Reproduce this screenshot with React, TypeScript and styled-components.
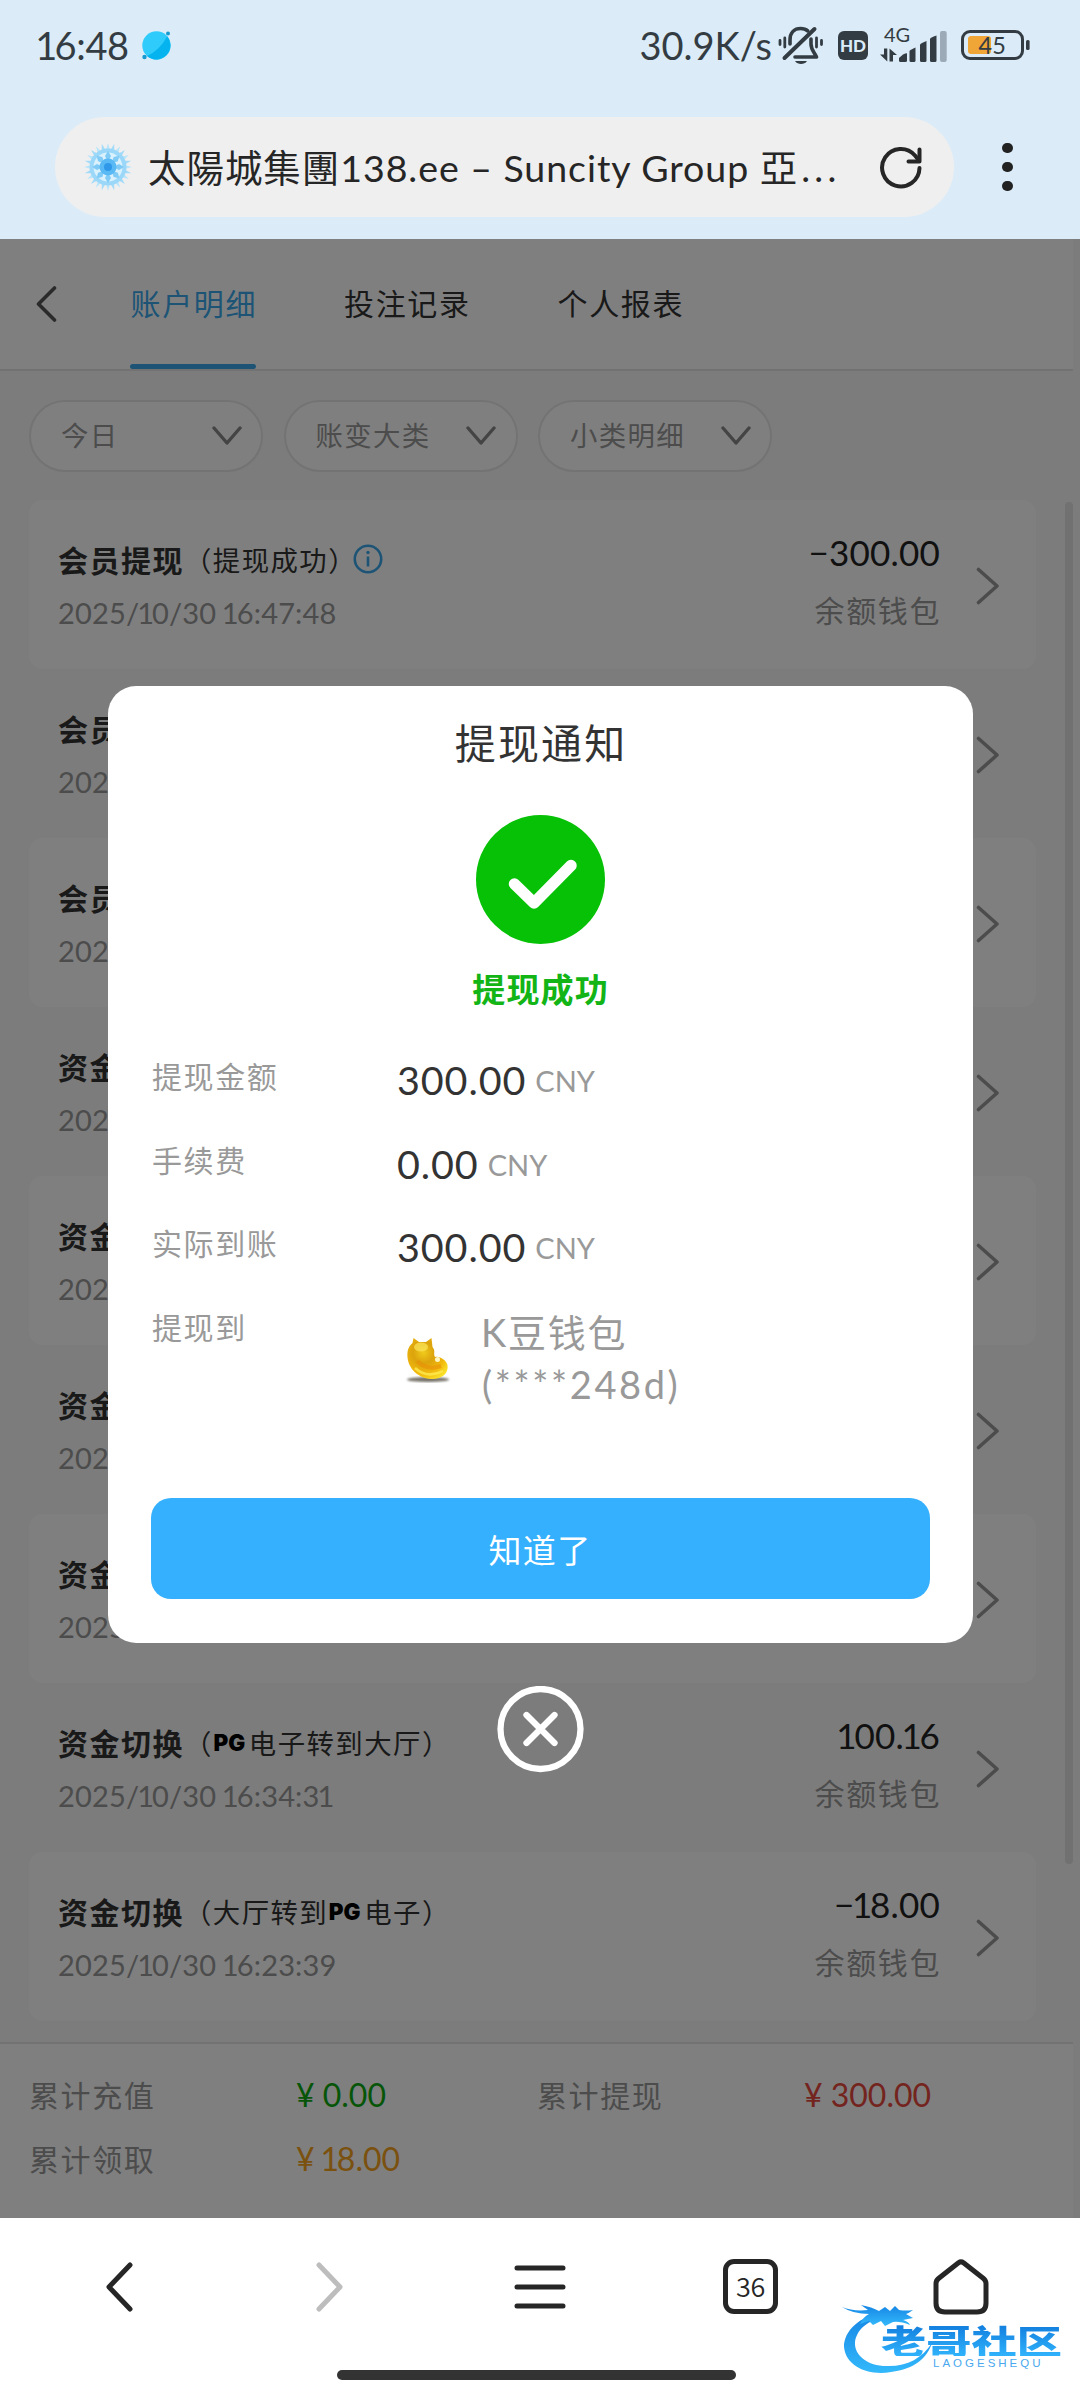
import React from "react";
import styled, { createGlobalStyle } from "styled-components";

const FONT = `Lato, "Noto Sans CJK SC", "Noto Sans", sans-serif`;

const Global = createGlobalStyle`
  * { box-sizing: border-box; }
  body { margin: 0; background: #fff; font-family: ${FONT}; -webkit-font-smoothing: antialiased; }
  svg { display: block; flex: none; }
`;

const Screen = styled.div`
  position: relative;
  width: 1080px;
  height: 2400px;
  display: flex;
  flex-direction: column;
  overflow: hidden;
  background: #fff;
`;

/* The digit one takes less room than the other figures. */
const NarrowOne = styled.span`
  margin: 0 -0.07em;
`;

const Figures = ({ children }: { children: string }) => (
  <span>
    {children.split(/(1)/).map((part, i) => (part === "1" ? <NarrowOne key={i}>1</NarrowOne> : part))}
  </span>
);

/* ---------- browser chrome ---------- */

const TopChrome = styled.header`
  height: 239px;
  background: #dbecf8;
  flex: none;
`;

const StatusBar = styled.div`
  height: 117px;
  padding: 16px 50px 0 38px;
  display: flex;
  align-items: flex-start;
  justify-content: space-between;
  color: #343c43;
`;

const StatusGroup = styled.div<{ $gap?: number }>`
  display: flex;
  align-items: center;
  height: 58px;
  gap: ${(p) => p.$gap ?? 0}px;
`;

const StatusText = styled.span<{ $spacing: number }>`
  font-size: 38px;
  line-height: 58px;
  letter-spacing: ${(p) => p.$spacing}px;
  white-space: nowrap;
`;

const StatusIcon = styled.span<{ $before: number }>`
  margin-left: ${(p) => p.$before}px;
  display: flex;
`;

const HdBadge = styled.span`
  width: 30px;
  height: 29px;
  margin-left: 14px;
  border-radius: 6px;
  background: #343c43;
  color: #dbecf8;
  font-size: 17px;
  font-weight: 900;
  line-height: 29px;
  text-align: center;
`;

const AddressRow = styled.div`
  display: flex;
  align-items: center;
  padding-left: 55px;
`;

const AddressPill = styled.div`
  width: 899px;
  height: 100px;
  border-radius: 50px;
  background: #efefef;
  padding: 0 31px 0 28px;
  display: flex;
  align-items: center;
`;

const AddressText = styled.span`
  flex: 1;
  margin-left: 15px;
  padding-top: 2px;
  color: #262626;
  font-family: Lato, "Noto Sans CJK TC", sans-serif;
  font-size: 37.5px;
  line-height: 60px;
  letter-spacing: 0.95px;
  white-space: nowrap;
`;

const Ellipsis = styled.span`
  margin-left: 3px;
  letter-spacing: 4.4px;
`;

const MenuDots = styled.div`
  margin-left: 48px;
  display: flex;
  flex-direction: column;
  gap: 8.5px;
`;

const Dot = styled.i`
  width: 10.5px;
  height: 10.5px;
  border-radius: 50%;
  background: #222;
`;

/* ---------- page ---------- */

const Page = styled.main`
  position: relative;
  height: 1979px;
  flex: none;
  background: #f8f8f8;
  padding-right: 7px;
  display: flex;
  flex-direction: column;
`;

const TabHeader = styled.nav`
  height: 132px;
  flex: none;
  background: #fff;
  border-bottom: 2px solid #e4e4e4;
  padding-left: 36px;
  display: flex;
  align-items: stretch;
`;

const BackButton = styled.span`
  width: 94px;
  display: flex;
  align-items: center;
`;

const Tab = styled.span<{ $active?: boolean }>`
  width: 126px;
  margin-right: 87.5px;
  display: flex;
  flex-direction: column;
  align-items: center;
  justify-content: space-between;
  font-size: 30px;
  line-height: 128px;
  height: 131px;
  letter-spacing: 1.6px;
  white-space: nowrap;
  color: ${(p) => (p.$active ? "#3ba9ec" : "#333")};
  padding-left: 1.6px;
`;

const TabInk = styled.i`
  width: 126px;
  height: 5px;
  margin: -3px 0 1px -1.6px;
  border-radius: 3px;
  background: #3ba9ec;
`;

const Filters = styled.div`
  display: flex;
  gap: 20.5px;
  padding: 29px 29px 28px;
  flex: none;
`;

const FilterPill = styled.div`
  width: 234px;
  height: 72px;
  border: 2px solid #e6e6e6;
  border-radius: 36px;
  background: #fff;
  padding: 0 19.5px 0 30px;
  display: flex;
  align-items: center;
  justify-content: space-between;
  color: #999;
  font-size: 27.4px;
  letter-spacing: 1.4px;
  line-height: 60px;
`;

const ListArea = styled.div`
  position: relative;
  height: 1542px;
  flex: none;
  padding: 0 37px 0 29px;
`;

const ScrollThumb = styled.i`
  position: absolute;
  right: 0;
  top: 2px;
  width: 8px;
  height: 1362px;
  border-radius: 4px;
  background: #e2e2e2;
`;

const Record = styled.article<{ $filled: boolean }>`
  height: 169px;
  border-radius: 14px;
  background: ${(p) => (p.$filled ? "#fff" : "transparent")};
  padding: 2px 36px 0 29px;
  display: flex;
  align-items: center;
`;

const RecordMain = styled.div`
  flex: 1;
  align-self: flex-start;
  padding-top: 35.5px;
`;

const RecordTitle = styled.div`
  display: flex;
  align-items: center;
  height: 42px;
  font-size: 30px;
  letter-spacing: 1.5px;
  font-weight: 700;
  color: #333;
  white-space: nowrap;
`;

const RecordNote = styled.span`
  display: flex;
  align-items: center;
  font-size: 27.4px;
  letter-spacing: 1.45px;
  font-weight: 400;
`;

const InfoMark = styled.span`
  margin-left: -4px;
  padding-top: 1px;
`;

const BrandPG = styled.b`
  width: 37px;
  margin-left: -1px;
  padding: 2px 2px 0 0;
  font-family: Inter, sans-serif;
  font-size: 22.5px;
  font-weight: 900;
  letter-spacing: 0;
  color: #000;
  text-align: center;
`;

const RecordDate = styled.div`
  margin-top: 12.5px;
  font-size: 29px;
  line-height: 42px;
  letter-spacing: 0.15px;
  color: #999;
  white-space: nowrap;
`;

const RecordSide = styled.div`
  align-self: flex-start;
  margin-right: 36px;
  padding-top: 29px;
  display: flex;
  flex-direction: column;
  align-items: flex-end;
`;

const Amount = styled.div`
  font-size: 35px;
  line-height: 42px;
  letter-spacing: 0.2px;
  color: #222;
`;

const Wallet = styled.div`
  margin-top: 16px;
  font-size: 30px;
  line-height: 42px;
  letter-spacing: 1.6px;
  margin-right: -1px;
  color: #999;
`;

const Summary = styled.footer`
  height: 176px;
  flex: none;
  background: #fff;
  border-top: 2px solid #e4e4e4;
  padding: 18px 30px 0 29px;
  display: grid;
  grid-template-columns: 267px 241px 267px 1fr;
  grid-auto-rows: 64px;
  align-items: center;
`;

const SummaryLabel = styled.span`
  font-size: 30px;
  letter-spacing: 1.6px;
  color: #999;
`;

const SummaryValue = styled.span<{ $color: string }>`
  font-size: 32px;
  color: ${(p) => p.$color};
`;

/* ---------- dialog ---------- */

const Overlay = styled.div`
  position: absolute;
  inset: 0;
  background: rgba(0, 0, 0, 0.5);
  display: flex;
  flex-direction: column;
  align-items: center;
  padding-top: 447px;
`;

const Dialog = styled.section`
  width: 865px;
  height: 957px;
  border-radius: 28px;
  background: #fff;
  padding: 0 43px;
  display: flex;
  flex-direction: column;
  align-items: center;
`;

const DialogTitle = styled.h2`
  margin: 29px 0 42px;
  padding-left: 2.2px;
  font-size: 41px;
  font-weight: 400;
  line-height: 58px;
  letter-spacing: 2.2px;
  color: #333;
`;

const ResultText = styled.div`
  margin-top: 20px;
  padding-left: 1.2px;
  font-size: 33px;
  font-weight: 700;
  line-height: 50px;
  letter-spacing: 1.2px;
  color: #12b416;
`;

const Details = styled.dl`
  width: 100%;
  margin: 40px 0 0;
  padding-left: 1.5px;
  display: grid;
  grid-template-columns: 245px 1fr;
  grid-template-rows: 83.5px 83.5px 83.5px 193.5px;
`;

const Label = styled.dt`
  font-size: 30px;
  line-height: 44px;
  letter-spacing: 1.6px;
  color: #999;
`;

const Value = styled.dd`
  margin: 0;
  padding-top: 2px;
  display: flex;
  align-items: baseline;
  gap: 9px;
  height: 48px;
  font-size: 39.5px;
  line-height: 48px;
  letter-spacing: 0.9px;
  color: #333;
`;

const Currency = styled.span`
  align-self: flex-start;
  padding-top: 1px;
  font-size: 29px;
  line-height: 48px;
  letter-spacing: 0;
  color: #999;
`;

const WalletTarget = styled.dd`
  margin: 0;
  padding: 1px 0 0 2px;
  display: flex;
  align-items: flex-start;
  gap: 30px;
  color: #999;
  font-size: 38px;
  line-height: 52.5px;
  letter-spacing: 1.8px;
`;

const BeanSlot = styled.span`
  padding-top: 28px;
`;

const WalletAccount = styled.span`
  display: block;
  padding-left: 1px;
  letter-spacing: 2.6px;
`;

const ConfirmButton = styled.button`
  width: 779px;
  height: 101px;
  border: 0;
  border-radius: 20px;
  background: #34b0ff;
  color: #fff;
  font-family: ${FONT};
  font-size: 33px;
  letter-spacing: 1.4px;
`;

const CloseButton = styled.div`
  margin-top: 43px;
`;

/* ---------- bottom bar ---------- */

const BottomBar = styled.nav`
  flex: 1;
  background: #fff;
  display: flex;
  flex-direction: column;
  align-items: center;
`;

const BottomIcons = styled.div`
  width: 100%;
  height: 137px;
  margin-bottom: 15px;
  padding: 0 14px;
  display: grid;
  grid-template-columns: repeat(5, 1fr);
  justify-items: center;
  align-items: center;
`;

const TabCount = styled.span`
  width: 54.5px;
  height: 55px;
  border: 5px solid #262626;
  border-radius: 11px;
  color: #262626;
  font-family: "Noto Sans CJK SC", sans-serif;
  font-weight: 350;
  font-size: 27px;
  line-height: 43px;
  letter-spacing: -0.5px;
  text-align: center;
`;

const HomeHandle = styled.i`
  width: 399px;
  height: 10px;
  margin-right: 7px;
  border-radius: 5px;
  background: #333;
`;

const Watermark = styled.div`
  position: absolute;
  left: 838px;
  top: 2300px;
  width: 232px;
  height: 80px;
`;

const WatermarkName = styled.div`
  position: absolute;
  left: 43px;
  top: 24px;
  font-family: "Noto Sans CJK SC", sans-serif;
  font-size: 33px;
  font-weight: 900;
  line-height: 32px;
  white-space: nowrap;
  transform: scaleX(1.37);
  transform-origin: left center;
  background: linear-gradient(#1482e0 10%, #2fb0fa 95%);
  background-clip: text;
  -webkit-background-clip: text;
  color: transparent;
`;

const WatermarkLatin = styled.div`
  position: absolute;
  left: 95px;
  top: 57px;
  font-family: "Liberation Sans", sans-serif;
  font-size: 11.5px;
  line-height: 13px;
  letter-spacing: 3px;
  color: #4aa9ee;
`;

/* ---------- icons ---------- */

const Stroke = ({ w, h, d, color, width }: { w: number; h: number; d: string; color: string; width: number }) => (
  <svg width={w} height={h} viewBox={`0 0 ${w} ${h}`} fill="none" stroke={color} strokeWidth={width} strokeLinecap="round" strokeLinejoin="round">
    <path d={d} />
  </svg>
);

const Planet = () => (
  <svg width="29" height="29" viewBox="0 0 29 29">
    <circle cx="14.5" cy="14.5" r="14.2" fill="#2fcbfb" />
    <path d="M25.2 5.2A14.2 14.2 0 0 1 5 25Q18 19 25.200 5.200Z" fill="#05b4ee" />
    <circle cx="26" cy="2.500" r="2" fill="#159bd0" />
    <circle cx="2.500" cy="26" r="2.200" fill="#159bd0" />
  </svg>
);

const Favicon = () => (
  <svg width="50" height="50" viewBox="-25 -25 50 50">
    {Array.from({ length: 24 }, (_, i) => (
      <path key={i} d="M-2.800 -14L0 -24L2.800 -14Z" fill={i % 2 ? "#a3dbf8" : "#b9e4fa"} transform={`rotate(${i * 15})`} />
    ))}
    <circle r="18.500" fill="#9ad7f8" />
    <circle r="14.500" fill="#d9f1fd" />
    {Array.from({ length: 8 }, (_, i) => (
      <path key={i} d="M0 -5L3 -11L0 -16L-3 -11Z" fill="#7fcbf6" transform={`rotate(${i * 45})`} />
    ))}
    <circle r="8.500" fill="#58b9f5" />
    <circle r="4" fill="#2f98e8" />
  </svg>
);

const MutedBell = () => (
  <svg width="46" height="38" viewBox="0 0 46 38" fill="none" stroke="#343c43" strokeWidth="3.600" strokeLinecap="round" strokeLinejoin="round">
    <path d="M12 18v-4C12 6.500 16.500 2.500 22.500 2.500c3 0 5.500.8 7.200 2.400M33 13v5c0 6 3.500 8.500 5.500 13H17" />
    <path d="M36.500 3L6.500 32" strokeWidth="4" />
    <path d="M17 35h12c-1.500 2.200-3.500 3-6 3s-4.500-.8-6-3z" fill="#343c43" stroke="none" />
    <path d="M6.800 12v9M2 14.500v4M38.500 12v9M43.500 14.500v4" strokeWidth="2.800" />
  </svg>
);

const Signal = () => (
  <svg width="68" height="48" viewBox="0 -6 68 48" fill="#343c43">
    <text x="4" y="14.500" fontFamily="Lato" fontSize="20">4G</text>
    <path d="M7.300 21.500v13L0 27.500h4v-6zM9.500 34.500v-13L17 28h-4v6.500z" />
    <path d="M19 31l4-3.500q4-2 4-1V33.500q0 1.500-1.500 1.500h-5Q19 35 19 33.500z" />
    <path d="M29.500 24q0-1 6-3.500V33.500q0 1.500-1.500 1.500h-3q-1.500 0-1.500-1.500z" />
    <path d="M40 17.500q0-1 6.500-3.500V33.500Q46.500 35 45 35h-3.500Q40 35 40 33.500z" />
    <path d="M50 12q0-1.500 6.500-3.500V33.500q0 1.500-1.500 1.500h-3.500Q50 35 50 33.500z" />
    <rect x="60" y="4" width="6.700" height="31" rx="2" fill="#9caab8" />
  </svg>
);

const Battery = () => (
  <svg width="70" height="32" viewBox="0 0 70 32">
    <rect x="2.500" y="2.500" width="60" height="27" rx="7.500" fill="none" stroke="#343c43" strokeWidth="3" />
    <rect x="66" y="11" width="3.600" height="10" rx="1.500" fill="#343c43" />
    <rect x="8" y="7" width="23" height="18" rx="3" fill="#f0a637" />
    <text x="18.500" y="24.500" fontFamily="Lato" fontSize="23.500" fill="#343c43">45</text>
  </svg>
);

const Reload = () => (
  <svg width="44" height="44" viewBox="0 0 44 44" fill="none" stroke="#262626" strokeWidth="4" strokeLinecap="round" strokeLinejoin="round">
    <path d="M40.500 23A18.700 18.700 0 1 1 36 10.500L40 15.500" />
    <path d="M40.500 4.500v12H29.500" />
  </svg>
);

const Info = () => (
  <svg width="30" height="30" viewBox="0 0 30 30" fill="none" stroke="#3ba9ec" strokeWidth="2.600">
    <circle cx="15" cy="15" r="13.200" />
    <path d="M15 12.500v10" />
    <circle cx="15" cy="8.500" r="1.700" fill="#3ba9ec" stroke="none" />
  </svg>
);

const Success = () => (
  <svg width="129" height="129" viewBox="0 0 129 129">
    <circle cx="64.500" cy="64.500" r="64.500" fill="#06c106" />
    <path d="M38.500 69L58 88L95 50.500" fill="none" stroke="#fff" strokeWidth="11.500" strokeLinecap="round" strokeLinejoin="round" />
  </svg>
);

const GoldBean = () => (
  <svg width="52" height="52" viewBox="0 0 52 52">
    <defs>
      <radialGradient id="bean" cx="0.400" cy="0.350" r="0.750">
        <stop offset="0" stopColor="#f0cb1c" />
        <stop offset="0.350" stopColor="#dca30c" />
        <stop offset="0.700" stopColor="#f2b90e" />
        <stop offset="1" stopColor="#fbe52b" />
      </radialGradient>
      <filter id="soft"><feGaussianBlur stdDeviation="1.300" /></filter>
    </defs>
    <ellipse cx="29" cy="45.500" rx="21" ry="2.600" fill="#77736b" filter="url(#soft)" />
    <path d="M13.500 9L14.500 4L20 8H27L32.500 4L33.500 13C37 17 34 19.500 36 23C40 21.500 47 25.500 48.500 31C50 40 42 45.500 32 45C18 44 7 33 8.500 18C9 14 11 11 13.500 9Z" fill="url(#bean)" />
    <ellipse cx="22" cy="13" rx="7" ry="4.500" fill="#fbe65a" opacity="0.700" />
    <path d="M16 34Q28 45 44 37" stroke="#fff15a" strokeWidth="2.500" fill="none" opacity="0.700" />
    <path d="M18 27Q28 37 42 32" stroke="#e88f08" strokeWidth="4" fill="none" opacity="0.600" />
    <circle cx="38.500" cy="25.500" r="2.500" fill="#fff6c4" />
  </svg>
);

const Close = () => (
  <svg width="88" height="88" viewBox="0 0 88 88" fill="none" stroke="#fff" strokeWidth="6.300" strokeLinecap="round">
    <circle cx="44.500" cy="43" r="40" />
    <path d="M30.500 29l28 28M58.500 29l-28 28" />
  </svg>
);

const Dragon = () => (
  <svg width="100" height="80" viewBox="0 0 100 80">
    <defs>
      <linearGradient id="dragon" x1="0" y1="0" x2="0" y2="1">
        <stop offset="0" stopColor="#1685e4" />
        <stop offset="1" stopColor="#33b9fb" />
      </linearGradient>
    </defs>
    <path d="M45 13C21 16 6 31 6 47C8 67 31 76 53 72C77 69 89 58 94 43C84 58 70 66 51 66C31 67 16 56 17 42C19 29 30 20 46 18Z" fill="url(#dragon)" />
    <path d="M4 7Q15 11.500 30 10L23 5Q34 7 41 11L47 7L52 11L57 6L61 10Q68 11 75 10Q71 13 68 14L75 18L65 20Q71 22 72 25Q62 21 55 22L47 26L43 21L35 25L31 21L22 24Q25 17 31 14Q15 14 4 7Z" fill="url(#dragon)" />
  </svg>
);

/* ---------- data ---------- */

type Entry = { title: string; note?: React.ReactNode; date: string; amount?: string };

const entries: Entry[] = [
  { title: "会员提现", note: <>（提现成功）<InfoMark><Info /></InfoMark></>, date: "2025/10/30 16:47:48", amount: "−300.00" },
  { title: "会员", date: "2025" },
  { title: "会员", date: "2025" },
  { title: "资金", date: "2025" },
  { title: "资金", date: "2025" },
  { title: "资金", date: "2025" },
  { title: "资金", date: "2025" },
  { title: "资金切换", note: <>（<BrandPG>PG</BrandPG>电子转到大厅）</>, date: "2025/10/30 16:34:31", amount: "100.16" },
  { title: "资金切换", note: <>（大厅转到<BrandPG>PG</BrandPG>电子）</>, date: "2025/10/30 16:23:39", amount: "−18.00" },
];

const filters = ["今日", "账变大类", "小类明细"];

const totals = [
  { label: "累计充值", value: "¥ 0.00", color: "#0cab10" },
  { label: "累计提现", value: "¥ 300.00", color: "#e8493c" },
  { label: "累计领取", value: "¥ 18.00", color: "#f5a21c" },
];

const charges = [
  { label: "提现金额", value: "300.00" },
  { label: "手续费", value: "0.00" },
  { label: "实际到账", value: "300.00" },
];

export default function App() {
  return (
    <Screen>
      <Global />
      <TopChrome>
        <StatusBar>
          <StatusGroup $gap={13}>
            <StatusText $spacing={-0.3}><Figures>16:48</Figures></StatusText>
            <Planet />
          </StatusGroup>
          <StatusGroup>
            <StatusText $spacing={0}>30.9K/s</StatusText>
            <StatusIcon $before={6}><MutedBell /></StatusIcon>
            <HdBadge>HD</HdBadge>
            <StatusIcon $before={12}><Signal /></StatusIcon>
            <StatusIcon $before={12}><Battery /></StatusIcon>
          </StatusGroup>
        </StatusBar>
        <AddressRow>
          <AddressPill>
            <Favicon />
            <AddressText>太陽城集團138.ee – Suncity Group 亞<Ellipsis>...</Ellipsis></AddressText>
            <Reload />
          </AddressPill>
          <MenuDots><Dot /><Dot /><Dot /></MenuDots>
        </AddressRow>
      </TopChrome>

      <Page>
        <TabHeader>
          <BackButton>
            <Stroke w={22} h={38} d="M18.500 3L2.500 19L18.500 35" color="#555" width={3.6} />
          </BackButton>
          <Tab $active>账户明细<TabInk /></Tab>
          <Tab>投注记录</Tab>
          <Tab>个人报表</Tab>
        </TabHeader>
        <Filters>
          {filters.map((f) => (
            <FilterPill key={f}>
              {f}
              <Stroke w={30} h={20} d="M2 2L15 17L28 2" color="#888" width={3.4} />
            </FilterPill>
          ))}
        </Filters>
        <ListArea>
          {entries.map((e, i) => (
            <Record key={i} $filled={i % 2 === 0}>
              <RecordMain>
                <RecordTitle>
                  {e.title}
                  {e.note && <RecordNote>{e.note}</RecordNote>}
                </RecordTitle>
                <RecordDate><Figures>{e.date}</Figures></RecordDate>
              </RecordMain>
              {e.amount && (
                <RecordSide>
                  <Amount><Figures>{e.amount}</Figures></Amount>
                  <Wallet>余额钱包</Wallet>
                </RecordSide>
              )}
              <Stroke w={24} h={38} d="M2.500 2.500L21 19L2.500 35.500" color="#999" width={3.6} />
            </Record>
          ))}
          <ScrollThumb />
        </ListArea>
        <Summary>
          {totals.map((t) => (
            <React.Fragment key={t.label}>
              <SummaryLabel>{t.label}</SummaryLabel>
              <SummaryValue $color={t.color}><Figures>{t.value}</Figures></SummaryValue>
            </React.Fragment>
          ))}
        </Summary>

        <Overlay>
          <Dialog>
            <DialogTitle>提现通知</DialogTitle>
            <Success />
            <ResultText>提现成功</ResultText>
            <Details>
              {charges.map((c) => (
                <React.Fragment key={c.label}>
                  <Label>{c.label}</Label>
                  <Value>{c.value}<Currency>CNY</Currency></Value>
                </React.Fragment>
              ))}
              <Label>提现到</Label>
              <WalletTarget>
                <BeanSlot><GoldBean /></BeanSlot>
                <span>K豆钱包<WalletAccount>(****248d)</WalletAccount></span>
              </WalletTarget>
            </Details>
            <ConfirmButton>知道了</ConfirmButton>
          </Dialog>
          <CloseButton><Close /></CloseButton>
        </Overlay>
      </Page>

      <BottomBar>
        <BottomIcons>
          <Stroke w={28} h={50} d="M25 3L4 25L25 47" color="#262626" width={5} />
          <Stroke w={28} h={50} d="M3 3L24 25L3 47" color="#bdbdbd" width={5} />
          <Stroke w={52} h={46} d="M3 4H49M3 23H49M3 42H49" color="#262626" width={5} />
          <TabCount>36</TabCount>
          <Stroke w={56} h={56} d="M25.500 3.800Q28 2 30.500 3.800L50.500 19.500Q53 21.500 53 24.500V44Q53 53 44 53H12Q3 53 3 44V24.500Q3 21.500 5.500 19.500Z" color="#262626" width={5} />
        </BottomIcons>
        <HomeHandle />
      </BottomBar>

      <Watermark>
        <Dragon />
        <WatermarkName>老哥社区</WatermarkName>
        <WatermarkLatin>LAOGESHEQU</WatermarkLatin>
      </Watermark>
    </Screen>
  );
}
